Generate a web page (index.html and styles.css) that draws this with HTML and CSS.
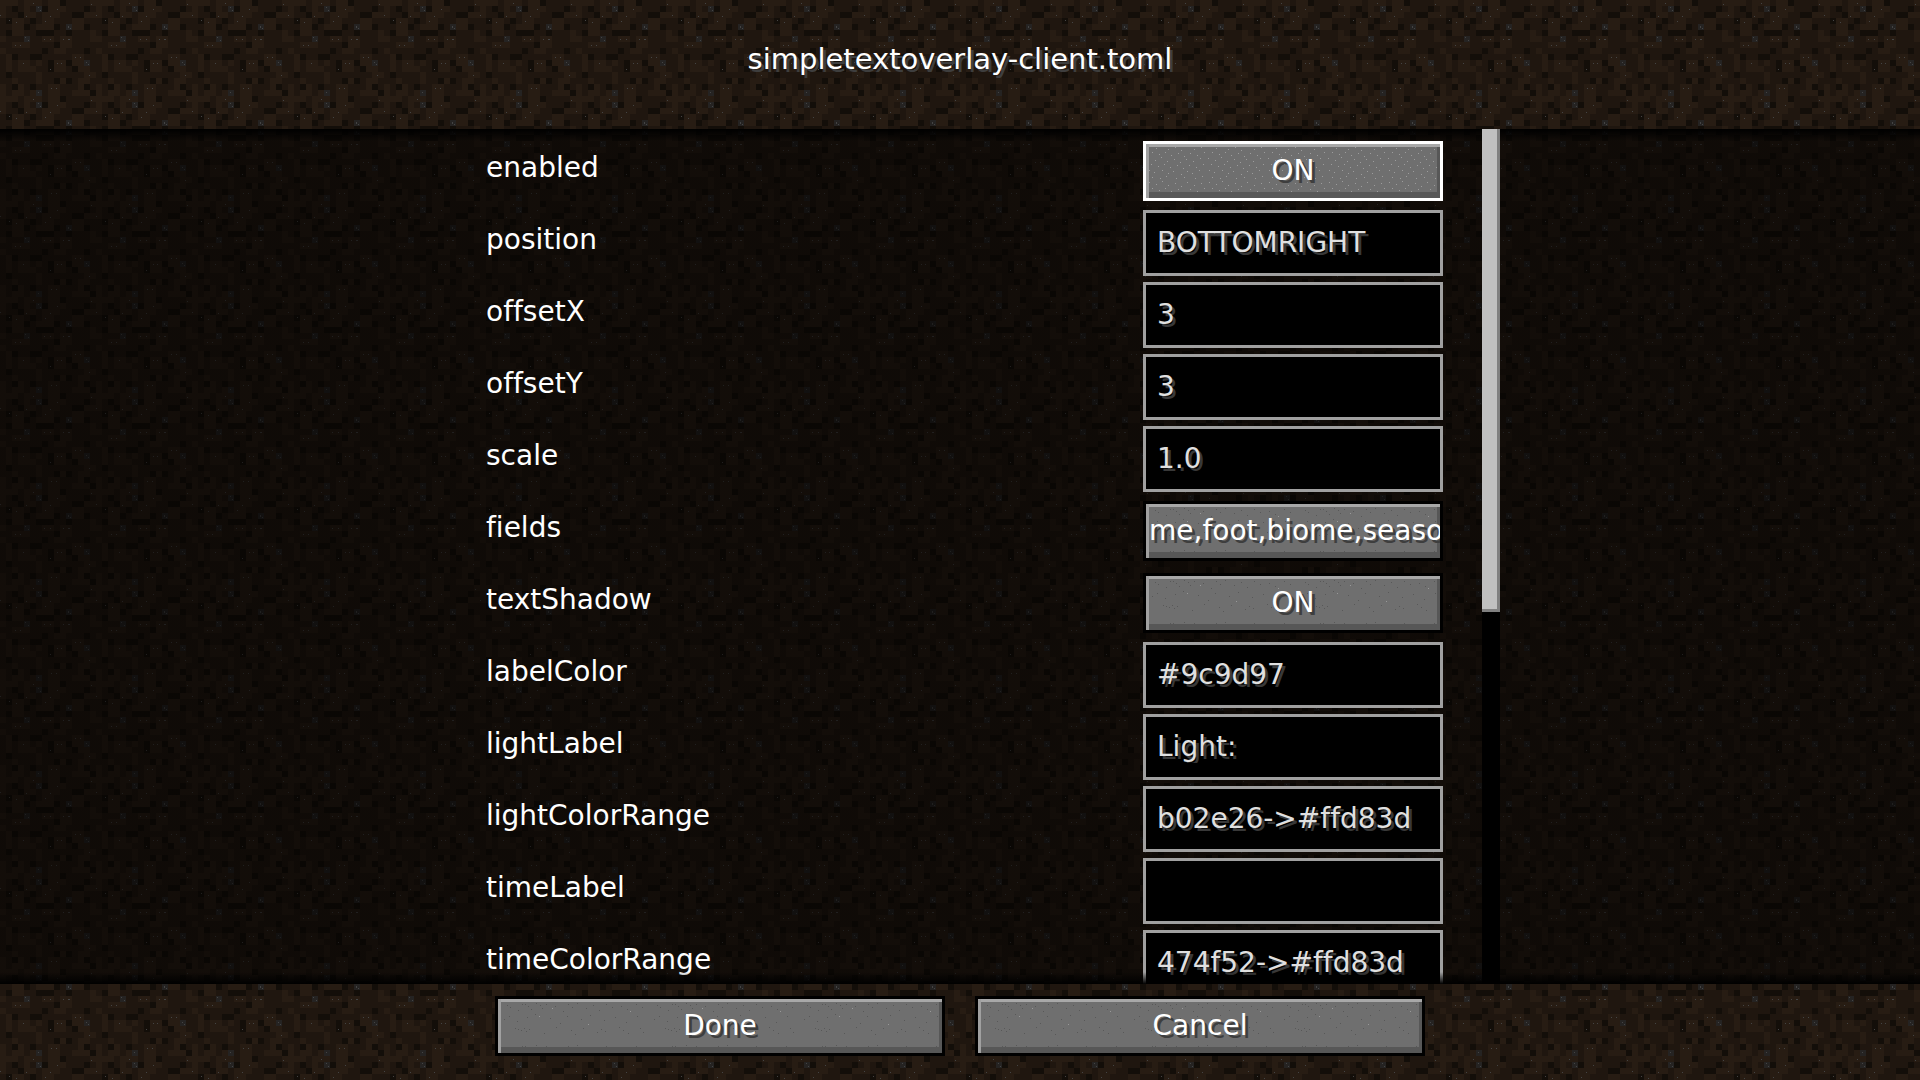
FILE: index.html
```html
<!DOCTYPE html>
<html lang="en">
<head>
  <meta charset="UTF-8" />
  <meta name="viewport" content="width=device-width, initial-scale=1.0"/>
  <title>simpletextoverlay-client.toml</title>
  <link rel="stylesheet" href="styles.css">
</head>
<body>
  <header>
    <h1>simpletextoverlay-client.toml</h1>
  </header>

  <main>
    <form class="options" id="configForm">
      <div class="row">
        <label for="enabled">enabled</label>
        <button type="button" class="btn active" id="enabled">ON</button>
      </div>
      <div class="row">
        <label for="position">position</label>
        <input type="text" id="position" value="BOTTOMRIGHT" />
      </div>
      <div class="row">
        <label for="offsetX">offsetX</label>
        <input type="text" id="offsetX" value="3" />
      </div>
      <div class="row">
        <label for="offsetY">offsetY</label>
        <input type="text" id="offsetY" value="3" />
      </div>
      <div class="row">
        <label for="scale">scale</label>
        <input type="text" id="scale" value="1.0" />
      </div>
      <div class="row">
        <label for="fields">fields</label>
        <button type="button" class="btn long" id="fields">me,foot,biome,season</button>
      </div>
      <div class="row">
        <label for="textShadow">textShadow</label>
        <button type="button" class="btn" id="textShadow">ON</button>
      </div>
      <div class="row">
        <label for="labelColor">labelColor</label>
        <input type="text" id="labelColor" value="#9c9d97" />
      </div>
      <div class="row">
        <label for="lightLabel">lightLabel</label>
        <input type="text" id="lightLabel" value="Light:" />
      </div>
      <div class="row">
        <label for="lightColorRange">lightColorRange</label>
        <input type="text" id="lightColorRange" value="b02e26-&gt;#ffd83d" />
      </div>
      <div class="row">
        <label for="timeLabel">timeLabel</label>
        <input type="text" id="timeLabel" value="" />
      </div>
      <div class="row">
        <label for="timeColorRange">timeColorRange</label>
        <input type="text" id="timeColorRange" value="474f52-&gt;#ffd83d" />
      </div>
    </form>
    <div class="scrollbar"><div class="thumb"></div></div>
  </main>

  <footer>
    <button type="submit" form="configForm" class="btn">Done</button>
    <button type="button" class="btn">Cancel</button>
  </footer>
</body>
</html>
```

FILE: styles.css
```css
:root {
  /* 16x16 dirt tile, drawn at 6px per texel */
  --dirt: url("data:image/svg+xml,%3Csvg xmlns='http://www.w3.org/2000/svg' viewBox='0 0 16 16' width='96' height='96' shape-rendering='crispEdges'%3E%3Cpath fill='%231f160f' d='M0 0h16v16H0z'/%3E%3Cpath stroke='%23271c13' d='M0 .5h3M4 .5h3M8 .5h2M15 .5h1M0 1.5h1M4 1.5h1M8 1.5h3M0 2.5h1M4 2.5h2M7 2.5h3M14 2.5h2M2 3.5h2M7 3.5h2M12 3.5h2M2 4.5h2M6 4.5h3M12 4.5h2M2 5.5h2M15 5.5h1M0 6.5h1M7 6.5h2M10 6.5h2M15 6.5h1M2 7.5h3M10 7.5h2M0 8.5h1M9 8.5h2M1 9.5h1M12 9.5h2M1 10.5h1M3 10.5h2M6 10.5h1M9 10.5h2M12 10.5h2M1 11.5h1M3 11.5h3M9 11.5h2M13 11.5h2M6 12.5h1M14 12.5h2M2 13.5h1M6 13.5h1M10 13.5h1M13 13.5h2M0 14.5h1M3 14.5h1M8 14.5h2M13 14.5h1M0 15.5h1M2 15.5h2M5 15.5h1M8 15.5h2M12 15.5h3'/%3E%3Cpath stroke='%23130e09' d='M10 .5h1M2 1.5h1M7 1.5h1M14 1.5h1M3 2.5h1M12 2.5h2M1 3.5h1M5 3.5h1M4 4.5h1M9 4.5h1M14 4.5h1M1 5.5h1M6 5.5h3M11 5.5h1M9 7.5h1M7 8.5h1M14 8.5h1M2 9.5h1M5 9.5h2M8 10.5h1M11 10.5h1M8 11.5h1M12 11.5h1M1 12.5h1M9 13.5h1M11 13.5h1M2 14.5h1M5 14.5h1M14 14.5h1M15 15.5h1'/%3E%3Cpath stroke='%23252322' d='M6 1.5h1M11 4.5h1M4 6.5h1M14 10.5h1M6 15.5h1'/%3E%3Cpath fill='%23444' d='M6.3 1.2h.2v.2h-.2zM6.7 1.6h.2v.2h-.2zM11.3 4.4h.2v.2h-.2zM11.6 4.7h.2v.2h-.2zM4.2 6.2h.2v.2h-.2zM4.6 6.7h.2v.2h-.2zM14.3 10.3h.2v.2h-.2zM14.7 10.6h.2v.2h-.2zM8.3 11.5h.2v.2h-.2zM6.3 15.3h.2v.2h-.2zM1.5 3.3h.2v.2h-.2zM0 2.5h.2v.2h-.2zM5.5 .5h.2v.2h-.2zM9.5 1.5h.2v.2h-.2zM15.2 .7h.2v.2h-.2zM4.3 2.6h.2v.2h-.2zM8.3 2.6h.2v.2h-.2zM2.7 3.6h.2v.2h-.2zM7.5 3.5h.2v.2h-.2zM7.3 6.5h.2v.2h-.2zM8.3 6.5h.2v.2h-.2zM10.5 6.5h.2v.2h-.2zM11.4 6.5h.2v.2h-.2zM2.5 7.5h.2v.2h-.2zM3.3 7.5h.2v.2h-.2zM12.5 9.5h.2v.2h-.2zM13.3 9.5h.2v.2h-.2zM3.8 10.5h.2v.2h-.2zM9.5 10.5h.2v.2h-.2zM10.2 10.5h.2v.2h-.2zM14.8 12.5h.2v.2h-.2zM8.5 14.7h.2v.2h-.2zM9.3 14.7h.2v.2h-.2z'/%3E%3C/svg%3E");
  --grain: url("data:image/svg+xml,%3Csvg xmlns='http://www.w3.org/2000/svg' width='150' height='42' shape-rendering='crispEdges'%3E%3Cpath stroke='%23585858' d='M9 6.5h1M12 8.5h1M20 11.5h1M24 5.5h1M27 5.5h1M30 7.5h1M33 10.5h1M38 4.5h1M42 6.5h1M44 9.5h1M48 5.5h1M57 7.5h1M65 12.5h1M70 5.5h1M74 8.5h1M79 4.5h1M88 9.5h1M95 6.5h1M101 11.5h1M108 5.5h1M114 8.5h1M123 7.5h1M129 10.5h1M138 5.5h1M144 8.5h1M6 20.5h1M11 17.5h1M19 22.5h1M29 18.5h1M37 15.5h1M52 19.5h1M62 24.5h1M69 17.5h1M83 20.5h1M92 16.5h1M106 21.5h1M117 18.5h1M128 23.5h1M139 17.5h1M17 29.5h1M20 30.5h1M23 31.5h1M26 29.5h1M28 32.5h1M31 30.5h1M46 34.5h1M58 28.5h1M73 31.5h1M77 35.5h1M85 29.5h1M99 33.5h1M103 30.5h1M107 32.5h1M121 28.5h1M125 31.5h1M130 34.5h1M142 29.5h1M145 33.5h1'/%3E%3Cpath stroke='%23999' d='M41 17.5h1M54 9.5h1M90 25.5h1M132 12.5h1'/%3E%3C/svg%3E");
  --grain-light: url("data:image/svg+xml,%3Csvg xmlns='http://www.w3.org/2000/svg' width='60' height='36' shape-rendering='crispEdges'%3E%3Cpath stroke='%239c9c9c' d='M3 2.5h1M10 4.5h1M16 1.5h1M22 5.5h1M29 3.5h1M35 6.5h1M41 2.5h1M48 5.5h1M55 3.5h1M6 8.5h1M13 10.5h1M19 8.5h1M25 11.5h1M32 9.5h1M38 12.5h1M44 9.5h1M51 11.5h1M58 8.5h1M2 14.5h1M9 16.5h1M15 13.5h1M21 17.5h1M28 15.5h1M34 18.5h1M40 15.5h1M47 17.5h1M54 14.5h1M5 20.5h1M12 22.5h1M18 20.5h1M24 23.5h1M31 21.5h1M37 24.5h1M43 21.5h1M50 23.5h1M57 20.5h1M3 26.5h1M8 28.5h1M16 26.5h1M22 29.5h1M27 27.5h1M35 30.5h1M41 27.5h1M46 29.5h1M53 26.5h1M6 33.5h1M14 34.5h1M20 32.5h1M30 34.5h1M38 33.5h1M49 34.5h1M56 32.5h1'/%3E%3C/svg%3E");
}

* {
  box-sizing: border-box;
}

body {
  margin: 0;
  height: 100vh;
  display: flex;
  flex-direction: column;
  background: var(--dirt) 0 0 / 96px 96px;
  color: #fff;
  font-family: "DejaVu Sans", Verdana, sans-serif;
  font-size: 28px;
  line-height: 36px;
  font-variant-ligatures: none;
}

header {
  flex: 0 0 129px;
  display: flex;
  align-items: center;
  justify-content: center;
  padding-bottom: 12px;
}

h1 {
  margin: 0;
  font-size: 29px;
  font-weight: normal;
  text-shadow: 3px 3px #3e3e3e;
}

main {
  position: relative;
  flex: 1;
  min-height: 0;
  display: flex;
  justify-content: center;
  gap: 39px;
  padding-left: 66px;
  overflow: hidden;
  background: linear-gradient(rgba(2, 1, 0, 0.54), rgba(2, 1, 0, 0.54)),
    var(--dirt) 0 -24px / 96px 96px;
}

/* black fade at both ends of the list, drawn over the rows */
main::before,
main::after {
  content: "";
  position: absolute;
  left: 0;
  right: 0;
  height: 12px;
  pointer-events: none;
}

main::before {
  top: 0;
  background: linear-gradient(#000, transparent);
}

main::after {
  bottom: 0;
  background: linear-gradient(transparent, #000);
}

.options {
  flex: 0 1 957px;
  padding-top: 6px;
}

.row {
  display: flex;
  align-items: center;
  justify-content: space-between;
  height: 72px;
}

label {
  padding-bottom: 6px;
}

input {
  width: 300px;
  height: 66px;
  padding: 0 11px 2px;
  border: 3px solid #a0a0a0;
  border-radius: 0;
  outline: none;
  background: #000;
  color: #e0e0e0;
  font: inherit;
  font-variant-ligatures: none;
  text-shadow: 3px 3px #383838;
}

.btn {
  width: 300px;
  height: 60px;
  padding: 0 3px 1px;
  border: 3px solid #000;
  background: #6f6f6f var(--grain);
  box-shadow: inset 3px 0 #a0a0a0, inset 0 3px #a8a8a8, inset -3px 0 #575757, inset 0 -6px #575757;
  color: #fff;
  font: inherit;
  text-shadow: 3px 3px #3e3e3e;
  white-space: nowrap;
  overflow: hidden;
  cursor: pointer;
}

.btn.active,
.btn:hover {
  border-color: #fff;
  background-image: var(--grain-light);
}

.btn.long {
  text-align: left;
}

.scrollbar {
  z-index: 1;
  flex: 0 0 18px;
  background: #000;
}

.thumb {
  height: 56.5%;
  background: #c0c0c0;
  border-right: 3px solid #808080;
  border-bottom: 3px solid #808080;
}

footer {
  flex: 0 0 96px;
  display: flex;
  justify-content: center;
  gap: 30px;
  padding-top: 12px;
}

footer .btn {
  width: 450px;
}
```
